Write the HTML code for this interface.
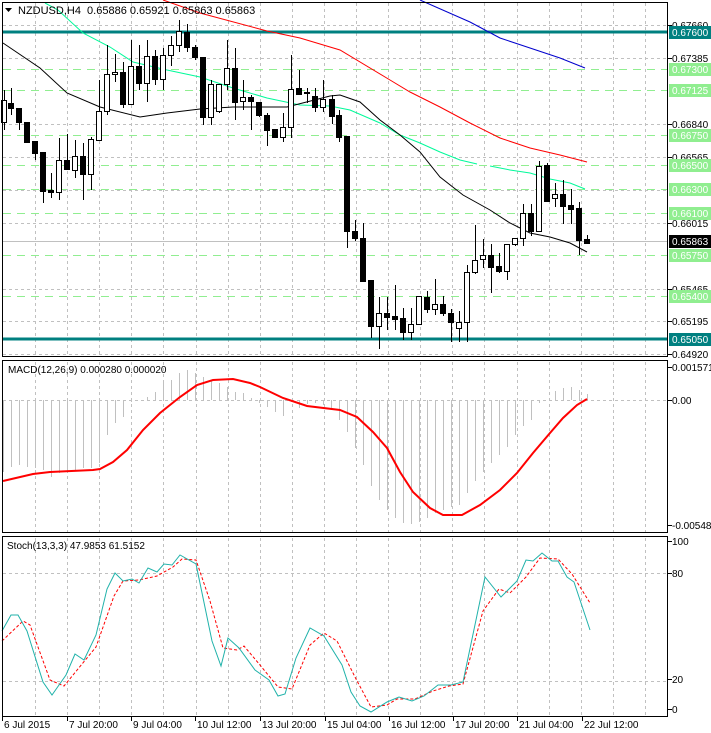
<!DOCTYPE html>
<html><head><meta charset="utf-8"><style>
html,body{margin:0;padding:0;background:#fff;}
svg{display:block;font-family:"Liberation Sans",sans-serif;}
</style></head><body>
<svg id="s" width="711" height="733" viewBox="0 0 711 733" xmlns="http://www.w3.org/2000/svg"></svg>
<script>
var s=document.getElementById('s'),h='';
function L(x1,y1,x2,y2,c,w,d){h+='<line x1="'+x1+'" y1="'+y1+'" x2="'+x2+'" y2="'+y2+'" stroke="'+c+'" stroke-width="'+(w||1)+'"'+(d?' stroke-dasharray="'+d+'"':'')+' shape-rendering="crispEdges"/>';}
function P(pts,c,w,d){h+='<polyline fill="none" points="'+pts.map(function(p){return p.join(',')}).join(' ')+'" stroke="'+c+'" stroke-width="'+(w||1)+'"'+(d?' stroke-dasharray="'+d+'"':'')+'/>';}
function T(x,y,t,c,sz,a){h+='<text x="'+x+'" y="'+y+'" fill="'+c+'" font-size="'+(sz||10)+'"'+(a?' text-anchor="'+a+'"':'')+'>'+t+'</text>';}
var grid='#c0c0c0';
// vertical grid
for(var k=0;k<20;k++){var gx=Math.round(35+32.1*k)+.5;
 L(gx,3,gx,356,grid,1,'3,3');L(gx,362,gx,532,grid,1,'3,3');L(gx,538,gx,716,grid,1,'3,3');}
// main horizontal grid
[25,58,124,157,190,223,289,321,354].forEach(function(y){L(3,y+.5,667,y+.5,grid,1,'3,3');});
// green levels
[69,90,135,165,189,213,255,296].forEach(function(y){L(3,y+.5,667,y+.5,'#90ee90',1,'8,6');});
// current price line
L(3,241.5,667,241.5,'#c0c0c0',1);
// teal levels
L(3,32,667,32,'#008080',3);L(3,339,667,339,'#008080',3);
// MAs
P([[163,0],[200,13],[267,31],[300,38],[340,50],[390,80],[410,92],[440,107],[470,123],[500,138],[530,148],[560,155],[587,162]],'#ff0000');
P([[420,0],[470,22],[500,38],[530,48],[560,58],[585,68]],'#0000cd');
P([[45,3],[58,10],[83,33],[110,47],[133,62],[167,70],[200,77],[233,88],[267,98],[300,105],[330,106],[350,110],[380,123],[400,135],[420,143],[440,152],[460,160],[477,164]],'#00fa9a');
P([[490,166],[510,170],[530,173],[550,179],[570,183],[585,189]],'#00fa9a');
P([[3,43],[40,68],[67,93],[100,107],[140,117],[167,113],[200,109],[233,107],[287,107],[330,96],[340,95],[360,102],[380,120],[400,135],[420,152],[440,177],[463,195],[490,210],[510,223],[530,233],[550,237],[570,243],[587,252]],'#000');
// candles [x,bodyTop,bodyBot,wickTop,wickBot,white]
var C=[[4,100,122,90,130,1],[11,103,108,88,115,0],[19,108,122,108,130,0],[27,122,142,122,142,0],[35,141,153,141,160,0],[43,152,191,152,203,0],[51,190,192,173,198,0],[59,160,192,138,200,1],[67,160,169,134,170,0],[75,156,170,140,178,1],[83,156,174,143,200,0],[91,139,174,137,190,1],[99,111,140,80,140,1],[107,74,111,45,115,1],[115,72,74,54,82,1],[123,72,104,62,108,0],[131,66,104,40,105,1],[139,66,83,45,90,0],[147,56,83,40,102,1],[155,56,79,50,85,0],[163,55,79,48,90,1],[171,45,55,36,66,1],[179,31,45,20,52,1],[187,32,47,24,52,0],[195,47,57,45,60,0],[203,57,117,57,125,0],[211,84,117,80,125,1],[219,84,111,84,113,1],[227,68,84,40,90,1],[235,68,102,48,120,0],[243,97,101,80,110,1],[251,97,101,95,130,0],[259,102,115,102,117,0],[267,115,130,113,146,0],[275,129,137,129,137,0],[283,127,137,113,142,1],[291,89,127,55,138,1],[299,88,94,70,94,0],[307,92,93,88,103,0],[315,96,107,88,112,0],[323,99,107,80,112,1],[332,99,116,95,124,0],[339,115,137,110,142,0],[347,136,231,136,248,0],[355,231,238,220,241,0],[363,238,281,223,282,0],[371,280,326,280,338,0],[379,313,326,297,349,1],[387,313,317,297,330,0],[395,316,319,285,330,0],[403,318,332,308,340,0],[411,324,332,308,340,1],[419,296,324,296,325,1],[427,297,309,291,313,0],[435,304,309,279,315,1],[443,304,313,296,316,0],[451,313,322,309,342,0],[459,322,328,311,342,1],[467,272,322,265,342,1],[475,260,272,225,274,1],[483,255,259,239,268,1],[491,255,267,244,293,0],[499,266,271,253,273,0],[507,244,271,244,280,1],[515,238,244,238,246,1],[523,213,238,204,246,1],[531,213,231,204,236,0],[539,166,231,161,232,1],[547,165,201,163,201,0],[555,194,198,183,207,1],[563,194,206,180,224,0],[571,205,209,189,224,0],[579,208,240,202,255,0],[587,239,243,235,243,0]];
C.forEach(function(c){var x=c[0]+.5;L(x,c[3],x,c[4],'#000');
 var bh=Math.max(c[2]-c[1],1);
 h+='<rect x="'+(c[0]-2.5)+'" y="'+(c[1]+.5)+'" width="5" height="'+bh+'" fill="'+(c[5]?'#fff':'#000')+'" stroke="#000" stroke-width="1"/>';});
// legend
h+='<polygon points="5,8 12,8 8.5,12" fill="#000"/>';
T(18,14,'NZDUSD,H4&#160; 0.65886 0.65921 0.65863 0.65863','#000',11);
// MACD
L(3,400.5,667,400.5,grid,1,'3,3');
var HB=[472,467,465,467,468,470,477,473,472,470,468,468,463,435,423,417,402,400,397,392,380,380,373,370,373,377,380,383,387,392,393,398,403,407,412,416,402,408,404,403,405,410,420,432,448,465,486,500,510,518,523,524,522,518,513,510,507,505,493,481,472,463,455,447,435,426,420,403,400,391,388,387,390,394];
HB.forEach(function(b,i){var x=3+8*i+.5;if(b!=400)L(x,400,x,b,'#c0c0c0');});
P([[3,481],[33,474],[50,472],[93,470],[100,469],[113,462],[127,450],[143,430],[160,413],[180,397],[197,385],[213,380],[233,379],[250,383],[260,387],[283,398],[307,406],[340,410],[357,417],[373,432],[387,448],[400,472],[413,492],[430,508],[443,515],[462,515],[480,505],[500,490],[517,473],[533,453],[550,433],[563,418],[577,405],[587,399]],'#ff0000',2);
T(8,373,'MACD(12,26,9) 0.000280 0.000020','#000',10);
// Stoch
L(3,573.5,667,573.5,grid,1,'3,3');L(3,681.5,667,681.5,grid,1,'3,3');
P([[2,641],[23,621],[30,625],[50,680],[64,686],[96,647],[114,596],[123,581],[139,580],[157,576],[173,567],[182,559],[196,560],[210,601],[223,648],[237,650],[244,646],[260,665],[278,687],[292,689],[310,645],[324,633],[337,641],[356,679],[371,707],[387,705],[397,699],[415,699],[433,691],[449,686],[463,684],[483,611],[499,589],[510,593],[526,577],[540,558],[558,559],[572,574],[590,603]],'#ff0000',1,'3,2');
P([[2,631],[11,615],[18,615],[27,631],[43,682],[52,695],[66,675],[75,654],[84,660],[96,635],[107,589],[115,573],[123,581],[132,579],[139,583],[148,568],[157,572],[164,564],[172,565],[180,555],[196,564],[212,641],[221,666],[228,638],[239,648],[255,670],[269,680],[278,696],[285,694],[296,658],[310,628],[324,636],[342,665],[351,692],[360,706],[371,712],[387,702],[399,697],[412,701],[424,696],[438,685],[451,685],[463,682],[485,577],[501,597],[517,581],[526,560],[533,561],[542,553],[552,561],[558,561],[567,577],[574,582],[590,630]],'#20b2aa',1);
T(7,549,'Stoch(13,3,3) 47.9853 61.5152','#000',10);
// panel borders
h+='<rect x="2.5" y="2.5" width="665" height="354" fill="none" stroke="#000"/>';
h+='<rect x="2.5" y="360.5" width="665" height="172" fill="none" stroke="#000"/>';
h+='<rect x="2.5" y="536.5" width="665" height="180" fill="none" stroke="#000"/>';
// price axis labels
[[25,'0.67660'],[58,'0.67385'],[124,'0.66840'],[157,'0.66565'],[223,'0.66015'],[289,'0.65465'],[321,'0.65195'],[354,'0.64920']].forEach(function(a){L(668,a[0]+.5,672,a[0]+.5,'#000');T(672,a[0]+4,a[1],'#000',10);});
[[69,'0.67300'],[90,'0.67125'],[135,'0.66750'],[165,'0.66500'],[189,'0.66300'],[213,'0.66100'],[255,'0.65750'],[296,'0.65400']].forEach(function(a){h+='<rect x="669" y="'+(a[0]-6)+'" width="42" height="13" fill="#90ee90"/>';T(672,a[0]+4,a[1],'#fff',10);});
[[32,'0.67600','#008080'],[339,'0.65050','#008080'],[241,'0.65863','#000']].forEach(function(a){h+='<rect x="669" y="'+(a[0]-6)+'" width="42" height="13" fill="'+a[2]+'"/>';T(672,a[0]+4,a[1],'#fff',10);});
// MACD axis
[[367,'0.001571'],[400,'0.00'],[525,'-0.00548']].forEach(function(a){L(668,a[0]+.5,672,a[0]+.5,'#000');T(672,a[0]+4,a[1],'#000',10);});
// Stoch axis
[[541,'100'],[573,'80'],[679,'20'],[709,'0']].forEach(function(a){L(668,a[0]+.5,672,a[0]+.5,'#000');T(672,a[0]+4,a[1],'#000',10);});
// dates
[[2,'6 Jul 2015'],[67,'7 Jul 20:00'],[131,'9 Jul 04:00'],[195,'10 Jul 12:00'],[260,'13 Jul 20:00'],[325,'15 Jul 04:00'],[389,'16 Jul 12:00'],[453,'17 Jul 20:00'],[517,'21 Jul 04:00'],[582,'22 Jul 12:00']].forEach(function(a){L(a[0]+.5,717,a[0]+.5,721,'#000');T(a[0]+2,728,a[1],'#000',10);});
s.innerHTML=h;
</script>
</body></html>
